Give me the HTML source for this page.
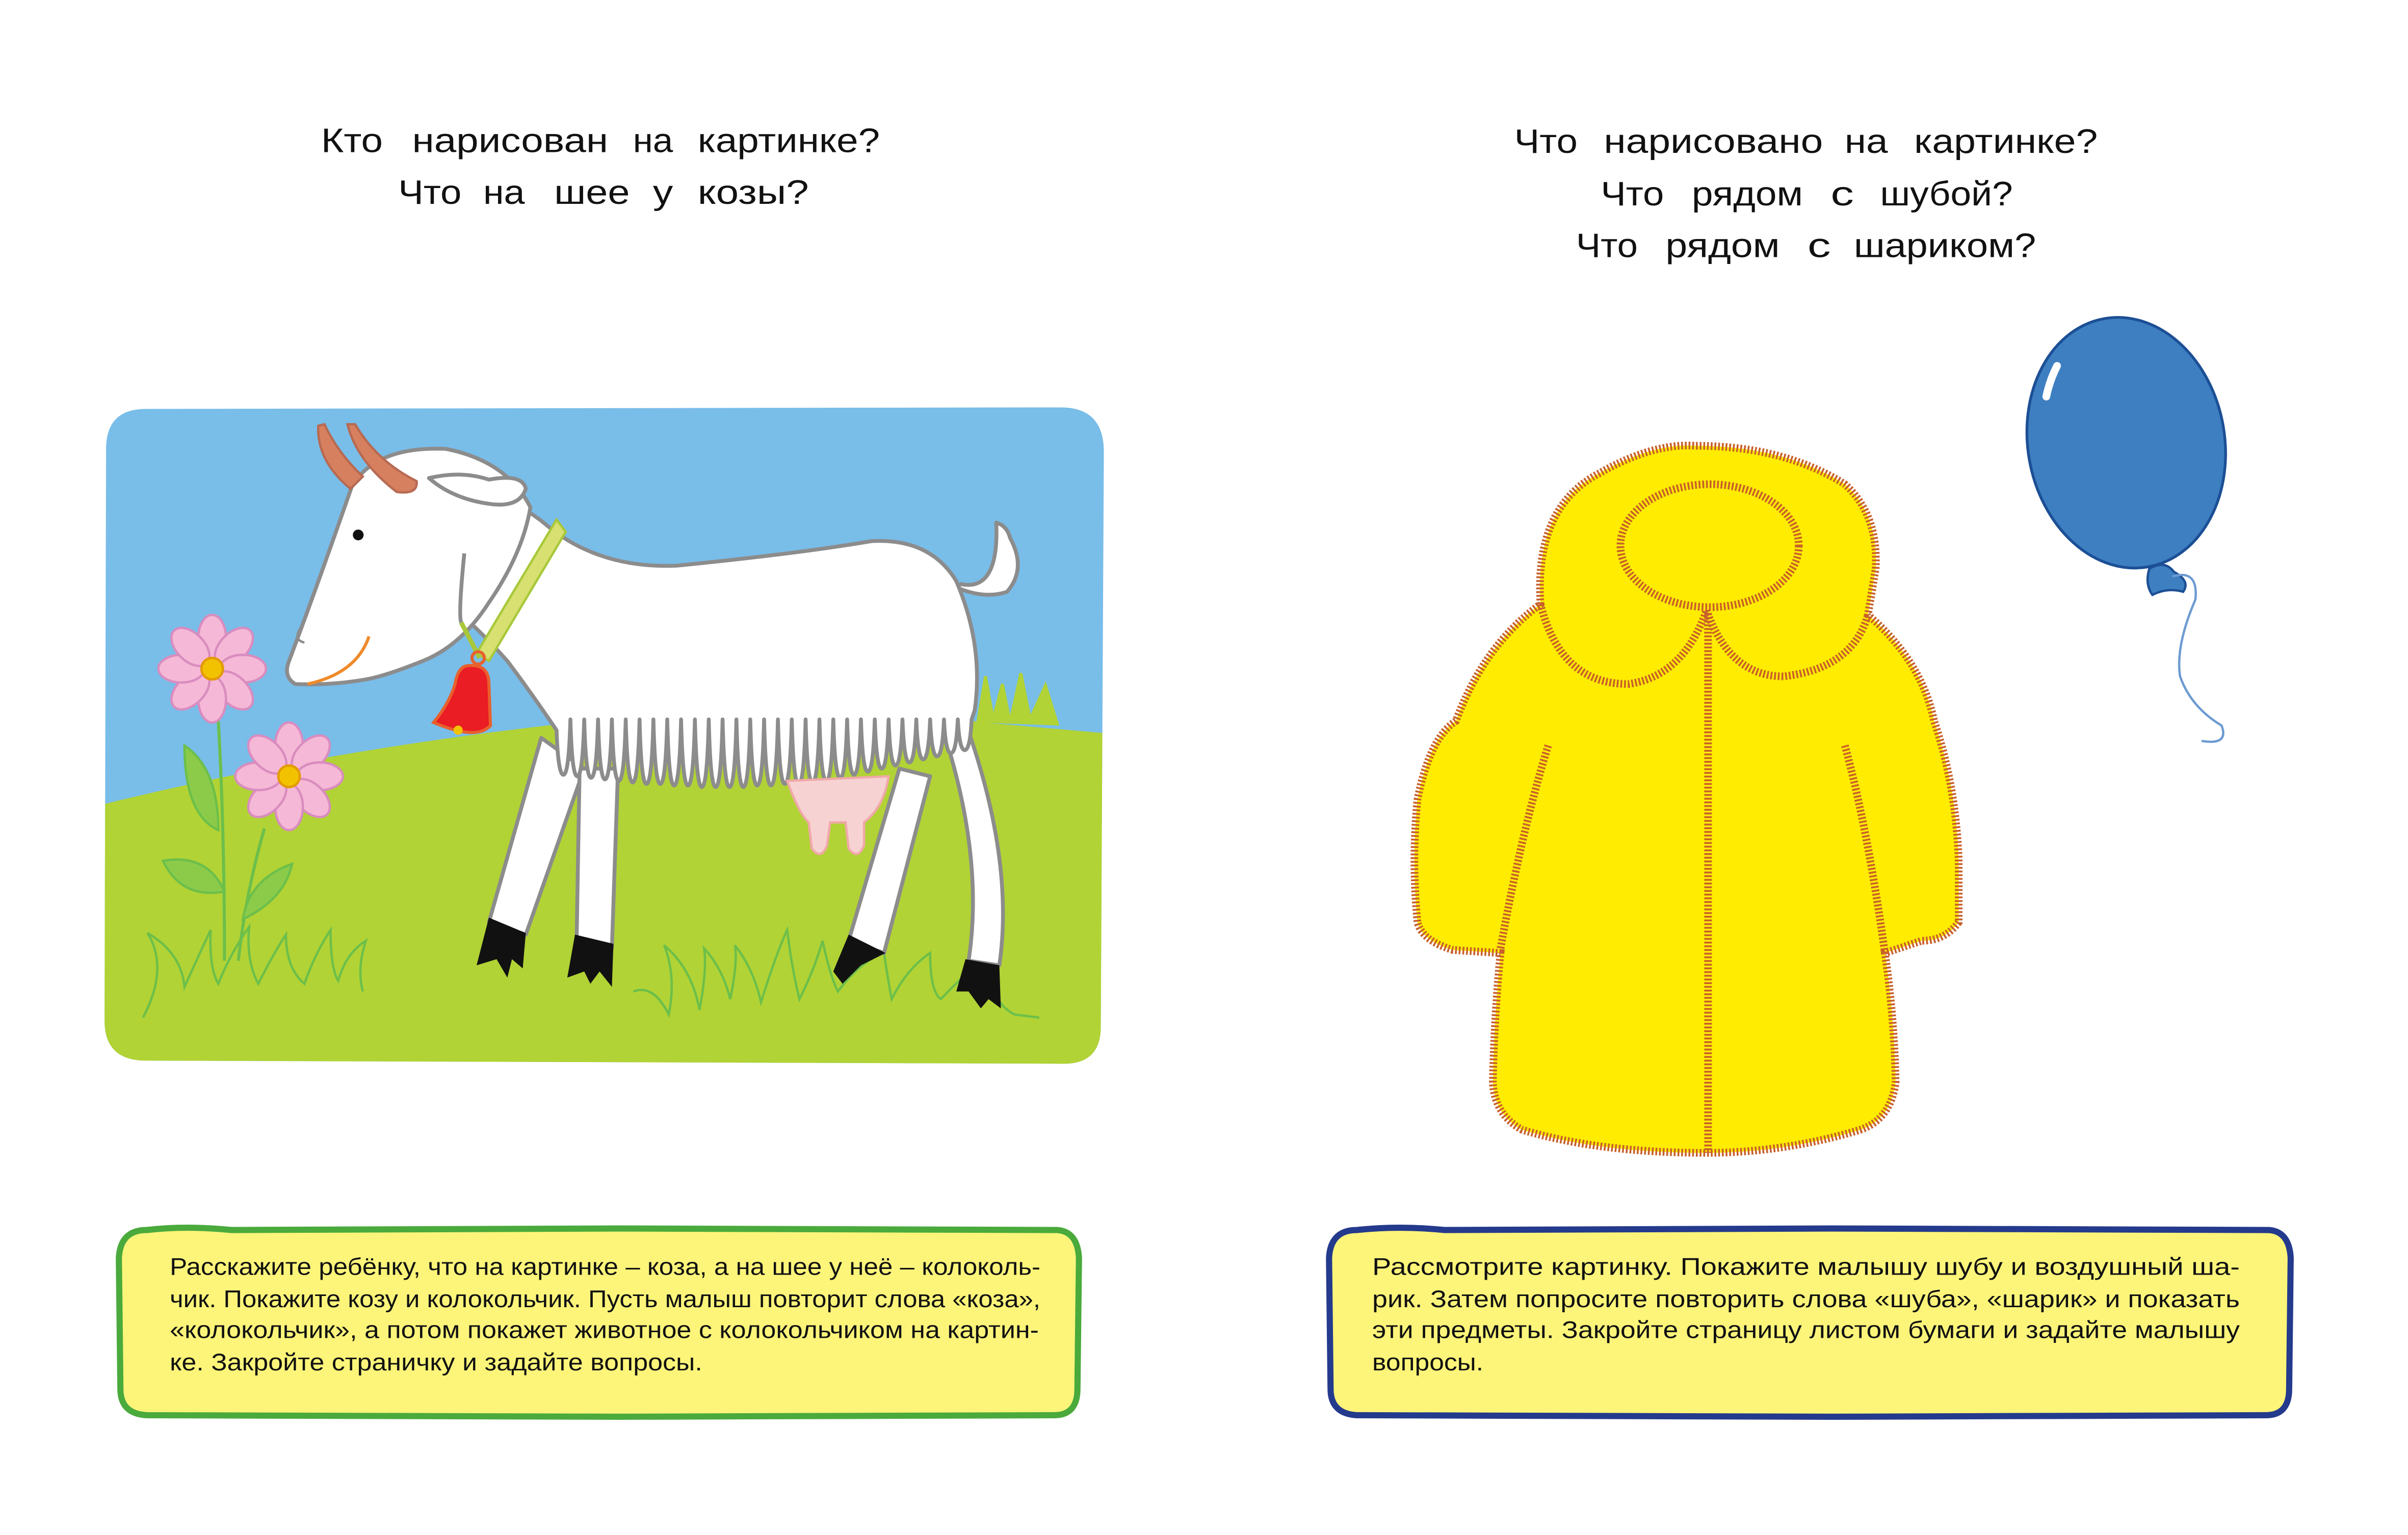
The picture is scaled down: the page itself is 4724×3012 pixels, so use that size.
<!DOCTYPE html>
<html><head><meta charset="utf-8"><style>
html,body{margin:0;padding:0;background:#fff;}
svg{display:block}
text{font-family:"Liberation Sans",sans-serif;}
</style></head><body>
<svg width="4724" height="3012" viewBox="0 0 1560 994.6" xmlns="http://www.w3.org/2000/svg">
<rect width="1560" height="995" fill="#fff"/>
<!-- Titles -->
<g font-size="22" fill="#111">
<text x="208" y="98.5" textLength="40" lengthAdjust="spacingAndGlyphs">Кто</text>
<text x="267" y="98.5" textLength="127" lengthAdjust="spacingAndGlyphs">нарисован</text>
<text x="410" y="98.5" textLength="26" lengthAdjust="spacingAndGlyphs">на</text>
<text x="452" y="98.5" textLength="118" lengthAdjust="spacingAndGlyphs">картинке?</text>
<text x="258" y="132" textLength="41" lengthAdjust="spacingAndGlyphs">Что</text>
<text x="313" y="132" textLength="27" lengthAdjust="spacingAndGlyphs">на</text>
<text x="359" y="132" textLength="49" lengthAdjust="spacingAndGlyphs">шее</text>
<text x="423" y="132" textLength="13" lengthAdjust="spacingAndGlyphs">у</text>
<text x="452" y="132" textLength="72" lengthAdjust="spacingAndGlyphs">козы?</text>

<text x="981" y="99" textLength="41" lengthAdjust="spacingAndGlyphs">Что</text>
<text x="1039" y="99" textLength="142" lengthAdjust="spacingAndGlyphs">нарисовано</text>
<text x="1195" y="99" textLength="28" lengthAdjust="spacingAndGlyphs">на</text>
<text x="1240" y="99" textLength="119" lengthAdjust="spacingAndGlyphs">картинке?</text>
<text x="1037" y="133" textLength="41" lengthAdjust="spacingAndGlyphs">Что</text>
<text x="1096" y="133" textLength="72" lengthAdjust="spacingAndGlyphs">рядом</text>
<text x="1186" y="133" textLength="15" lengthAdjust="spacingAndGlyphs">с</text>
<text x="1218" y="133" textLength="86" lengthAdjust="spacingAndGlyphs">шубой?</text>
<text x="1021" y="166.5" textLength="40" lengthAdjust="spacingAndGlyphs">Что</text>
<text x="1079" y="166.5" textLength="74" lengthAdjust="spacingAndGlyphs">рядом</text>
<text x="1171" y="166.5" textLength="15" lengthAdjust="spacingAndGlyphs">с</text>
<text x="1201" y="166.5" textLength="118" lengthAdjust="spacingAndGlyphs">шариком?</text>
</g>

<g transform="scale(0.996)">
<!-- Goat picture -->
<defs><clipPath id="pc"><path d="M95,266 L690,265 Q718,265 718,294 L716,668 Q716,693 690,692 L95,690 Q68,690 68,664 L69,292 Q69,266 95,266Z"/></clipPath></defs>
<g clip-path="url(#pc)">
<rect x="60" y="260" width="670" height="440" fill="#79bde9"/>
<path d="M60,525 Q200,490 356,472 Q520,455 640,470 L730,478 L730,700 L60,700Z" fill="#b1d335"/>
<path d="M636,470 L641,440 L646,468 L652,445 L657,470 L664,438 L670,468 L680,446 L688,472" fill="#b1d335" stroke="#b1d335" stroke-width="2"/>
</g>
<!-- grass -->
<g fill="none" stroke="#6cbf4a" stroke-width="1.5">
<path d="M93,662 Q110,630 96,607 Q118,620 120,642 Q130,620 137,605 Q136,630 142,640 Q150,620 162,603 Q160,625 168,640 Q178,620 186,608 Q186,630 198,640 Q205,620 215,605 Q215,630 220,638 Q225,620 238,612 Q232,630 236,645"/>
<path d="M412,645 Q425,640 435,660 Q440,635 432,615 Q450,630 455,657 Q460,630 458,617 Q470,630 475,650 Q480,625 478,615 Q490,630 495,652 Q505,620 512,605 Q515,630 520,650 Q530,630 535,612 Q540,635 545,645 Q560,625 575,620 Q578,640 580,650 Q590,630 605,620 Q605,645 612,650 Q630,630 650,620 Q640,650 660,660 L676,662"/>
</g>
<!-- flowers -->
<g fill="none" stroke="#6cbf4a" stroke-width="2">
<path d="M142,469 Q146,540 146,625"/>
<path d="M172,539 Q160,580 155,625"/>
</g>
<path d="M120,485 Q142,500 142,540 Q120,530 120,485Z" fill="#8ccb4a" stroke="#6cbf4a" stroke-width="1.5"/>
<path d="M106,560 Q135,555 146,580 Q118,585 106,560Z" fill="#8ccb4a" stroke="#6cbf4a" stroke-width="1.5"/>
<path d="M190,562 Q185,585 158,598 Q162,572 190,562Z" fill="#8ccb4a" stroke="#6cbf4a" stroke-width="1.5"/>
<g id="fl1" transform="translate(138,435)">
<g fill="#f5b8d6" stroke="#d98cbf" stroke-width="1.5">
<ellipse cx="0" cy="-20" rx="9" ry="15"/><ellipse cx="0" cy="-20" rx="9" ry="15" transform="rotate(45)"/>
<ellipse cx="0" cy="-20" rx="9" ry="15" transform="rotate(90)"/><ellipse cx="0" cy="-20" rx="9" ry="15" transform="rotate(135)"/>
<ellipse cx="0" cy="-20" rx="9" ry="15" transform="rotate(180)"/><ellipse cx="0" cy="-20" rx="9" ry="15" transform="rotate(225)"/>
<ellipse cx="0" cy="-20" rx="9" ry="15" transform="rotate(270)"/><ellipse cx="0" cy="-20" rx="9" ry="15" transform="rotate(315)"/>
</g>
<circle r="7" fill="#f2c200" stroke="#e39a00" stroke-width="1.5"/>
</g>
<use href="#fl1" transform="translate(50,70)"/>

<!-- goat -->
<g stroke="#8c8c8c" stroke-width="2.5" fill="#fff" stroke-linejoin="round">
<path d="M352,480 L318,600 L342,608 L380,500Z"/>
<path d="M377,500 L375,615 L398,617 L402,500Z"/>
<path d="M585,500 L552,612 L575,620 L605,505Z"/>
<path d="M615,480 Q640,560 630,625 L650,628 Q660,560 628,470Z"/>
<path d="M625,380 Q650,385 648,340 Q655,342 657,350 Q668,370 655,385 Q640,390 622,382Z"/>
<path d="M300,320 Q330,320 356,342 Q390,370 440,368 Q520,360 567,352 Q605,350 622,378 Q640,420 634,462 L632,468 Q631,488 627.5,488 Q624,488 623,468 Q622,490 618.5,490 Q615,490 614,468 Q613,492 609.5,492 Q606,492 605,468 Q604,494 600.5,494 Q597,494 596,468 Q595,496 591.5,496 Q588,496 587,468 Q586,498 582.5,498 Q579,498 578,468 Q577,500 573.5,500 Q570,500 569,468 Q568,502 564.5,502 Q561,502 560,468 Q559,504 555.5,504 Q552,504 551,468 Q550,506 546.5,506 Q543,506 542,468 Q541,508 537.5,508 Q534,508 533,468 Q532,509 528.5,509 Q525,509 524,468 Q523,510 519.5,510 Q516,510 515,468 Q514,510 510.5,510 Q507,510 506,468 Q505,511 501.5,511 Q498,511 497,468 Q496,511 492.5,511 Q489,511 488,468 Q487,512 483.5,512 Q480,512 479,468 Q478,512 474.5,512 Q471,512 470,468 Q469,512 465.5,512 Q462,512 461,468 Q460,512 456.5,512 Q453,512 452,468 Q451,511 447.5,511 Q444,511 443,468 Q442,511 438.5,511 Q435,511 434,468 Q433,510 429.5,510 Q426,510 425,468 Q424,510 420.5,510 Q417,510 416,468 Q415,509 411.5,509 Q408,509 407,468 Q406,508 402.5,508 Q399,508 398,468 Q397,507 393.5,507 Q390,507 389,468 Q388,506 384.5,506 Q381,506 380,468 Q379,505 375.5,505 Q372,505 371,468 Q370,504 366.5,504 Q363,504 362,475 Q345,450 330,430 Q312,410 300,400 Z"/>
<path d="M229,316 Q245,290 290,292 Q330,300 345,330 Q340,360 318,392 Q300,420 275,430 Q250,440 238,442 Q215,446 192,445 Q184,440 188,430 Q205,385 229,316Z"/>
<path d="M302,360 Q298,400 300,405" fill="none"/>
<path d="M279,311 Q300,306 318,312 Q340,308 342,318 Q338,330 320,328 Q295,325 279,311Z"/>
</g>
<g fill="#d7805f" stroke="#b76a52" stroke-width="1.5">
<path d="M207,277 Q206,300 228,318 L236,310 Q220,295 211,276Z"/>
<path d="M226,276 Q232,300 258,320 Q272,322 271,313 Q245,300 231,276Z"/>
</g>
<circle cx="233" cy="348" r="3.5" fill="#111"/>
<path d="M196,408 Q190,416 198,418" fill="none" stroke="#8c8c8c" stroke-width="1.5"/>
<path d="M240,414 Q232,438 200,445" fill="none" stroke="#f08a2a" stroke-width="2"/>
<path d="M362,338 L368,346 L318,430 L310,425Z" fill="#d7e070" stroke="#a8c83a" stroke-width="1.5"/>
<path d="M300,405 L312,428" stroke="#a8c83a" stroke-width="3"/>
<circle cx="311" cy="428" r="4" fill="none" stroke="#e8602c" stroke-width="2"/>
<path d="M305,433 Q318,432 318,445 L319,472 Q310,482 282,470 Q292,458 296,445 Q298,433 305,433Z" fill="#ea1c24" stroke="#e8602c" stroke-width="2"/>
<circle cx="298" cy="475" r="3" fill="#f2c200"/>
<path d="M512,508 Q520,530 526,535 L528,552 Q534,560 538,550 L540,535 L550,535 L552,552 Q558,560 562,550 L562,535 Q575,525 578,505Z" fill="#f7d2d2" stroke="#f0a8a8" stroke-width="1.5"/>
<g fill="#111">
<path d="M318,597 L342,607 L340,630 L333,624 L330,636 L323,624 L310,628Z"/>
<path d="M374,608 L399,614 L398,642 L390,632 L384,640 L380,632 L369,636Z"/>
<path d="M552,608 L576,620 L560,628 L548,640 L542,632Z"/>
<path d="M628,624 L650,628 L651,656 L643,650 L638,656 L630,645 L622,645Z"/>
</g>

<!-- Coat -->
<path d="M1002,393 Q998,330 1040,308 Q1075,288 1103,290 Q1160,290 1200,315 Q1222,335 1220,370 L1215,400 Q1250,430 1258,469 Q1272,510 1274,559 L1274,600 Q1265,612 1250,612 L1226,620 Q1232,660 1233,704 Q1230,728 1210,735 Q1160,750 1110,750 Q1040,750 990,735 Q972,725 971,704 Q972,660 976,620 L945,618 Q925,612 922,600 Q918,560 922,520 Q930,480 947,469 Q965,420 1002,393Z" fill="#ffec00" stroke="#c8602a" stroke-width="5" stroke-dasharray="1.2 1.2"/>
<g fill="none" stroke="#c8602a" stroke-width="5" stroke-dasharray="1.2 1.2">
<ellipse cx="1112" cy="355" rx="58" ry="40"/>
<path d="M1002,393 Q1015,445 1059,445 Q1095,440 1110,397 Q1125,440 1160,440 Q1205,435 1215,400"/>
<path d="M1111,399 L1111,750"/>
<path d="M1007,485 Q990,540 976,617"/>
<path d="M1200,485 Q1215,540 1226,620"/>
</g>

<!-- Balloon -->
<ellipse cx="1383" cy="288" rx="64" ry="82" transform="rotate(-10 1383 288)" fill="#3d7fc1" stroke="#1c4f95" stroke-width="1.8"/>
<path d="M1338,238 Q1333,248 1331,258" stroke="#fff" stroke-width="5" stroke-linecap="round" fill="none"/>
<path d="M1398,370 Q1408,364 1414,372 Q1425,378 1420,385 Q1410,382 1400,387 Q1395,380 1398,370Z" fill="#3d7fc1" stroke="#1c4f95" stroke-width="1.5"/>
<path d="M1413,375 Q1430,370 1428,390 Q1415,420 1418,440 Q1425,460 1445,472 Q1450,485 1432,482" fill="none" stroke="#6c9bd2" stroke-width="1.5"/>
</g>

<!-- Left info box -->
<path d="M95,797 Q120,794 150,797 L400,796 L685,797 Q698,798 699,815 L698,900 Q698,917 683,917 L400,918 L95,917 Q78,916 78,900 L77,815 Q78,797 95,797Z" fill="#fdf57a" stroke="#4aaa3c" stroke-width="4"/>
<g font-size="15.5" fill="#111">
<text x="110" y="826" textLength="564" lengthAdjust="spacingAndGlyphs">Расскажите ребёнку, что на картинке – коза, а на шее у неё – колоколь-</text>
<text x="110" y="847" textLength="564" lengthAdjust="spacingAndGlyphs">чик. Покажите козу и колокольчик. Пусть малыш повторит слова «коза»,</text>
<text x="110" y="867" textLength="563" lengthAdjust="spacingAndGlyphs">«колокольчик», а потом покажет животное с колокольчиком на картин-</text>
<text x="110" y="888" textLength="345" lengthAdjust="spacingAndGlyphs">ке. Закройте страничку и задайте вопросы.</text>
</g>
<!-- Right info box -->
<path d="M879,797 Q906,794 936,797 L1186,796 L1470,797 Q1483,798 1484,815 L1483,900 Q1483,917 1468,917 L1186,918 L879,917 Q862,916 862,900 L861,815 Q862,797 879,797Z" fill="#fdf57a" stroke="#243a8c" stroke-width="4"/>
<g font-size="15.5" fill="#111">
<text x="889" y="826" textLength="562" lengthAdjust="spacingAndGlyphs">Рассмотрите картинку. Покажите малышу шубу и воздушный ша-</text>
<text x="889" y="847" textLength="562" lengthAdjust="spacingAndGlyphs">рик. Затем попросите  повторить слова «шуба», «шарик» и показать</text>
<text x="889" y="867" textLength="562" lengthAdjust="spacingAndGlyphs">эти предметы. Закройте страницу листом бумаги и задайте малышу</text>
<text x="889" y="888" textLength="72" lengthAdjust="spacingAndGlyphs">вопросы.</text>
</g>
</svg>
</body></html>
